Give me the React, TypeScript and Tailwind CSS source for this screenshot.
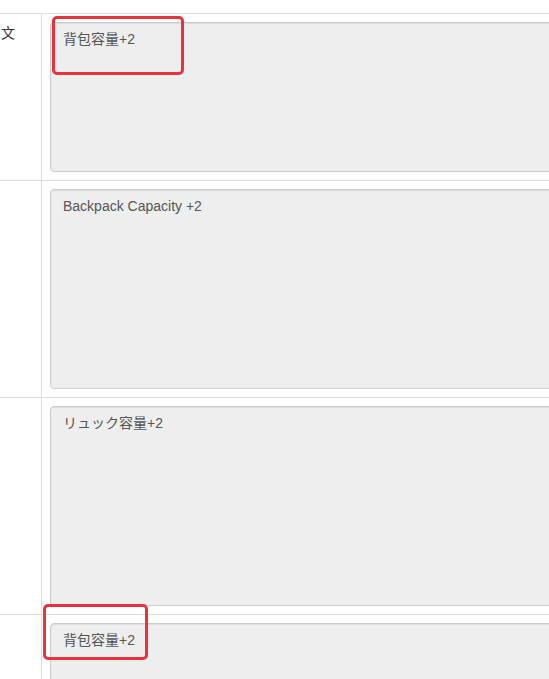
import React from "react";

const rows = [
  { label: "中文", text: "背包容量+2", h: "h-[150px]", font: "'Liberation Sans', 'Noto Sans CJK SC', sans-serif" },
  { label: "", text: "Backpack Capacity +2", h: "h-[200px]", font: "'Liberation Sans', 'Noto Sans CJK SC', sans-serif" },
  { label: "", text: "リュック容量+2", h: "h-[200px]", font: "'Liberation Sans', 'Noto Sans CJK JP', sans-serif" },
  { label: "", text: "背包容量+2", h: "h-[200px]", font: "'Liberation Sans', 'Noto Sans CJK SC', sans-serif" },
];

export default function App() {
  return (
    <div className="relative w-[549px] h-[679px] overflow-hidden bg-white text-[14px] text-[#333]" style={{ fontFamily: "'Liberation Sans', 'Noto Sans CJK SC', sans-serif" }}>
      <div className="-ml-[21px] w-[760px]">
        <div className="h-[13px]" />
        {rows.map((r, i) => (
          <div key={i} className="flex border-t border-[#ddd]">
            <div className="w-[63px] shrink-0 border-r border-[#ddd] p-2 leading-5" style={{ fontFamily: "'Noto Sans CJK SC', sans-serif" }}>
              {r.label}
            </div>
            <div className="flex-1 p-2">
              <div
                className={`${r.h} rounded-[4px] border border-[#ccc] bg-[#eeeeee] px-3 py-[6px] leading-5 text-[#555] shadow-[inset_0_1px_1px_rgba(0,0,0,0.075)]`}
                style={{ fontFamily: r.font }}
              >
                {r.text}
              </div>
            </div>
          </div>
        ))}
      </div>
      <div className="absolute left-[52px] top-[16px] w-[132px] h-[59px] rounded-[5px] border-[3px] border-[#e8323c]" />
      <div className="absolute left-[43px] top-[604px] w-[105px] h-[56px] rounded-[5px] border-[3px] border-[#e8323c]" />
    </div>
  );
}
